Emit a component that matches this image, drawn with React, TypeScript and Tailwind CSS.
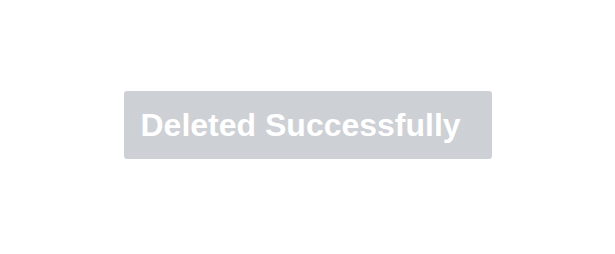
export default function App() {
  return (
    <div className="flex h-[254px] w-full items-center justify-center bg-white">
      <div className="mb-[4px] flex h-[68px] w-[368px] items-center rounded-[3px] bg-[#cdd0d5] pl-[17px]">
        <span className="font-['Liberation_Sans',Arial,sans-serif] text-[32px] font-bold leading-none text-white">
          Deleted Successfully
        </span>
      </div>
    </div>
  );
}
